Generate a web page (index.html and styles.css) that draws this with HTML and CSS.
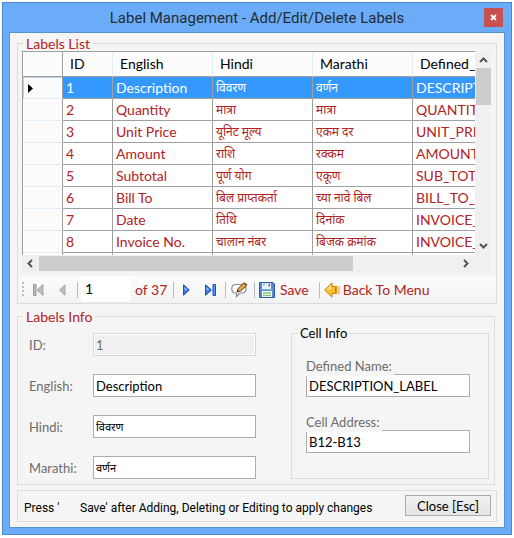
FILE: index.html
```
<!DOCTYPE html>
<html lang="en">
<head>
    <meta charset="UTF-8">
    <title>Label Management</title>
    <link rel="stylesheet" href="styles.css">
</head>
<body>

    <div class="window">
        <div class="titlebar">
            <h1>Label Management - Add/Edit/Delete Labels</h1>
            <button class="close-x" aria-label="Close window">
                <svg width="7" height="7" viewBox="0 0 7 7"><path d="M1 1L6 6M6 1L1 6" stroke="#fff" stroke-width="1.8"/></svg>
            </button>
        </div>

        <div class="client">

            <!-- Labels list -->
            <fieldset class="list-box">
                <legend>Labels List</legend>

                <div class="grid">
                    <div class="grid-view">
                        <table>
                            <thead>
                                <tr><th class="row-head"></th><th class="col-id">ID</th><th>English</th><th>Hindi</th><th>Marathi</th><th class="col-name">Defined_</th></tr>
                            </thead>
                            <tbody>
                                <tr class="selected"><td class="row-head"><svg width="5" height="9" viewBox="0 0 5 9"><path d="M0 0L5 4.500L0 9Z" fill="#000"/></svg></td><td>1</td><td>Description</td><td class="hi">विवरण</td><td class="hi">वर्णन</td><td>DESCRIPT</td></tr>
                                <tr><td class="row-head"></td><td>2</td><td>Quantity</td><td class="hi">मात्रा</td><td class="hi">मात्रा</td><td>QUANTITY</td></tr>
                                <tr><td class="row-head"></td><td>3</td><td>Unit Price</td><td class="hi">यूनिट मूल्य</td><td class="hi">एकम दर</td><td>UNIT_PRI</td></tr>
                                <tr><td class="row-head"></td><td>4</td><td>Amount</td><td class="hi">राशि</td><td class="hi">रक्कम</td><td>AMOUNT_</td></tr>
                                <tr><td class="row-head"></td><td>5</td><td>Subtotal</td><td class="hi">पूर्ण योग</td><td class="hi">एकूण</td><td>SUB_TOTA</td></tr>
                                <tr><td class="row-head"></td><td>6</td><td>Bill To</td><td class="hi">बिल प्राप्तकर्ता</td><td class="hi">च्या नावे बिल</td><td>BILL_TO_L</td></tr>
                                <tr><td class="row-head"></td><td>7</td><td>Date</td><td class="hi">तिथि</td><td class="hi">दिनांक</td><td>INVOICE_</td></tr>
                                <tr><td class="row-head"></td><td>8</td><td>Invoice No.</td><td class="hi">चालान नंबर</td><td class="hi">बिजक क्रमांक</td><td>INVOICE_</td></tr>
                                <tr><td class="row-head"></td><td></td><td></td><td></td><td></td><td></td></tr>
                            </tbody>
                        </table>
                    </div>
                    <div class="vscroll">
                        <svg width="9" height="6" viewBox="0 0 9 6"><path d="M1 5L4.500 1.500L8 5" fill="none" stroke="#555" stroke-width="2"/></svg>
                        <div class="vthumb"></div>
                        <svg class="down" width="9" height="6" viewBox="0 0 9 6"><path d="M1 1L4.500 4.500L8 1" fill="none" stroke="#555" stroke-width="2"/></svg>
                    </div>
                    <div class="hscroll">
                        <svg width="6" height="9" viewBox="0 0 6 9"><path d="M5 1L1.500 4.500L5 8" fill="none" stroke="#555" stroke-width="2"/></svg>
                        <div class="hthumb"></div>
                        <svg class="right" width="6" height="9" viewBox="0 0 6 9"><path d="M1 1L4.500 4.500L1 8" fill="none" stroke="#555" stroke-width="2"/></svg>
                    </div>
                </div>

                <div class="toolbar">
                    <span class="grip"></span>
                    <button class="tool first" aria-label="First">
                        <svg width="11" height="12" viewBox="0 0 11 12"><path d="M0.500 0.500H3V11.500H0.500Z" fill="#b9b9b9" stroke="#9c9c9c"/><path d="M10 0.500V11.500L4 6Z" fill="#bdbdbd" stroke="#a6a6a6"/></svg>
                    </button>
                    <button class="tool prev" aria-label="Previous">
                        <svg width="7" height="12" viewBox="0 0 7 12"><path d="M6 0.800V11.200L0.500 6Z" fill="#bdbdbd" stroke="#a6a6a6"/></svg>
                    </button>
                    <span class="sep"></span>
                    <input class="position" type="text" value="1" aria-label="Current record">
                    <span class="count">of 37</span>
                    <span class="sep"></span>
                    <button class="tool next" aria-label="Next">
                        <svg width="7" height="12" viewBox="0 0 7 12"><path d="M0.600 0.800V11.200L6.300 6Z" fill="#3f7fe8" stroke="#1746b4"/><path d="M1.500 3V6H4.500Z" fill="#8fc0fb"/></svg>
                    </button>
                    <button class="tool last" aria-label="Last">
                        <svg width="11" height="12" viewBox="0 0 11 12"><path d="M0.600 0.800V11.200L6.500 6Z" fill="#3f7fe8" stroke="#1746b4"/><path d="M1.500 3V6H4.500Z" fill="#8fc0fb"/><path d="M8 0.500H10.500V11.500H8Z" fill="#5b98f2" stroke="#1b4dba"/></svg>
                    </button>
                    <span class="sep"></span>
                    <button class="tool edit" aria-label="Edit">
                        <svg width="17" height="16" viewBox="0 0 17 16"><path d="M4.500 2.500H11C14 2.500 15 4.500 15 6.500C15 9.500 13.500 11 11 11H9L5.500 14.500V11H4.500C2 11 0.800 9.300 0.800 6.800C0.800 4.300 2 2.500 4.500 2.500Z" fill="#fff" stroke="#8a8a8a" stroke-width="1.200"/><path d="M6 10L7.200 6.500L12.500 1L15.500 3.600L9.700 9Z" fill="#e8a545" stroke="#5d4221" stroke-width="1"/><path d="M12.500 1L13.500 0.400L16.400 2.600L15.500 3.600Z" fill="#6b4b33"/><path d="M6 10L6.700 8L8 9.300Z" fill="#222"/></svg>
                    </button>
                    <span class="sep"></span>
                    <button class="tool save">
                        <svg width="16" height="16" viewBox="0 0 16 16"><path d="M0.500 0.500H14L15.500 2V15.500H0.500Z" fill="#5687d0" stroke="#2d5ba8"/><path d="M3 1H12V7H3Z" fill="#e9f1fb"/><path d="M9.500 1.500H11V4.500H9.500Z" fill="#5279b4"/><path d="M5 1V4" stroke="#7ea2d5"/><path d="M2 7.500H14" stroke="#8db2e8"/><path d="M3 9H13V15H3Z" fill="#fff"/><path d="M4 11H12M4 13.500H12" stroke="#83c373" stroke-width="1.500"/></svg>
                        Save
                    </button>
                    <span class="sep"></span>
                    <button class="tool back">
                        <svg width="16" height="16" viewBox="0 0 16 16"><path d="M0.700 8L8 0.800V4.500H11.500V11.500H8V15.200Z" fill="#fcc02e" stroke="#cf7d12"/><path d="M2.500 7.500L7 3V7.500Z" fill="#ffe28a"/><path d="M12.500 4V12M15 4V12" stroke="#de9626" stroke-width="1"/><path d="M13.700 4V12" stroke="#fbd056"/></svg>
                        Back To Menu
                    </button>
                </div>
            </fieldset>

            <!-- Details of the selected label -->
            <fieldset class="info-box">
                <legend>Labels Info</legend>
                <div class="fields">
                    <label for="lblId">ID:</label>
                    <input type="text" id="lblId" value="1" disabled>
                    <label for="lblEnglish">English:</label>
                    <input type="text" id="lblEnglish" value="Description">
                    <label for="lblHindi">Hindi:</label>
                    <input class="hi" type="text" id="lblHindi" value="विवरण">
                    <label for="lblMarathi">Marathi:</label>
                    <input class="hi" type="text" id="lblMarathi" value="वर्णन">
                </div>

                <fieldset class="cell-box">
                    <legend>Cell Info</legend>
                    <label for="cellName">Defined Name:</label>
                    <input type="text" id="cellName" value="DESCRIPTION_LABEL">
                    <label for="cellAddr">Cell Address:</label>
                    <input type="text" id="cellAddr" value="B12-B13">
                </fieldset>
            </fieldset>

            <div class="footer">
                <p><span class="press">Press '</span>Save' after Adding, Deleting or Editing to apply changes</p>
                <button class="close-btn">Close [Esc]</button>
            </div>
        </div>
    </div>

</body>
</html>
```

FILE: styles.css
```
* {
    box-sizing: border-box;
    margin: 0;
    padding: 0;
}

body {
    background: #fff;
    padding: 2px;
    font-family: Lato, "Noto Sans", sans-serif;
    font-size: 14px;
    color: #000;
}

button, input {
    font-family: inherit;
    font-size: inherit;
}

.window {
    background: #6aacf8;
    border: 1px solid #4f88c8;
    padding: 0 6px 6px;
}

/* Title bar */
.titlebar {
    position: relative;
    height: 29px;
}

.titlebar h1 {
    font-family: Roboto, sans-serif;
    font-size: 15px;
    font-weight: normal;
    line-height: 30px;
    text-align: center;
    color: #262b33;
}

.close-x {
    position: absolute;
    top: 5px;
    right: 2px;
    width: 19px;
    height: 19px;
    border: none;
    background: #c75050;
    display: flex;
    align-items: center;
    justify-content: center;
}

.client {
    background: #f5f5f5;
    border: 1px solid #5a8fce;
    padding: 3px 7px 5px;
}

fieldset {
    border: 1px solid #dcdcdc;
    min-width: 0;
}

legend {
    padding: 0 3px;
    line-height: 15px;
    color: #b22222;
}

.list-box {
    padding: 0 5px 0 4px;
}

.list-box legend {
    margin-left: 1px;
}

/* Data grid */
.grid {
    display: grid;
    grid-template-columns: 1fr 16px;
    grid-template-rows: 204px 17px;
}

.grid-view {
    overflow: hidden;
    background: #fff;
    border-top: 1px solid #a0a0a0;
    border-left: 1px solid #a0a0a0;
}

table {
    table-layout: fixed;
    width: 100%;
    border-collapse: separate;
    border-spacing: 0;
}

th, td {
    height: 22px;
    line-height: 20px;
    padding-left: 3px;
    text-align: left;
    white-space: nowrap;
    overflow: hidden;
    border-right: 1px solid #a0a0a0;
    border-bottom: 1px solid #a0a0a0;
    color: #b22222;
}

th {
    width: 100px;
    height: 25px;
    padding-left: 7px;
    font-weight: normal;
    background: #fcfcfc;
    border-right-color: #e3eefb;
    color: #000;
}

.hi {
    font-size: 12px;
}

.row-head {
    width: 40px;
    padding-left: 5px;
    background: #fcfcfc;
    border-right-color: #a0a0a0;
}

td.row-head {
    border-bottom-color: #e3eefb;
}

.col-id {
    width: 50px;
}

.col-name {
    width: auto;
}

th:last-child, td:last-child {
    border-right: none;
}

.selected td {
    background: #3399ff;
    color: #fff;
}

.selected td.row-head {
    background: #fafcfe;
    box-shadow: inset 1px 1px #c3d3e8;
}

.vscroll {
    background: #f0f0f0;
    display: flex;
    flex-direction: column;
    align-items: center;
    padding: 6px 0;
}

.vthumb {
    width: 15px;
    height: 37px;
    margin-top: 5px;
    background: #cdcdcd;
}

.down {
    margin-top: auto;
}

.hscroll {
    grid-column: 1 / 3;
    background: #f0f0f0;
    display: flex;
    align-items: center;
    padding: 0 22px 0 5px;
}

.hthumb {
    width: 71%;
    height: 15px;
    margin-left: 6px;
    background: #cdcdcd;
}

.right {
    margin-left: auto;
}

/* Navigator */
.toolbar {
    display: flex;
    align-items: center;
    height: 27px;
    margin: 4px -5px 0 -3px;
    padding-left: 3px;
    background: linear-gradient(#fcfcfc, #f3f3f3);
    color: #b22222;
}

.grip {
    width: 2px;
    height: 15px;
    background: repeating-linear-gradient(#bdbdbd 0 2px, transparent 2px 4px);
}

.tool {
    display: flex;
    align-items: center;
    gap: 5px;
    border: none;
    background: none;
    color: inherit;
    white-space: nowrap;
}

.sep {
    width: 1px;
    height: 16px;
    background: #bdbdbd;
}

.first {
    margin: 0 15px 0 9px;
}

.prev {
    margin-right: 11px;
}

.position {
    width: 50px;
    height: 25px;
    margin: 0 4px 2px 3px;
    padding-left: 4px;
    border: none;
    background: #fff;
}

.count {
    width: 38px;
}

.next {
    margin: 0 15px 0 9px;
}

.last {
    margin-right: 9px;
}

.edit {
    margin: 0 6px 0 5px;
}

.save {
    margin: 0 10px 0 4px;
}

.back {
    margin-left: 4px;
    gap: 3px;
}

/* Labels info */
.info-box {
    display: grid;
    grid-template-columns: 227fr 198fr;
    gap: 35px;
    margin: 5px 2px 0 0;
    padding: 2px 5px 5px 11px;
}

.info-box > legend {
    margin-left: -6px;
}

.fields {
    display: grid;
    grid-template-columns: 64px 1fr;
    align-content: start;
    align-items: center;
    row-gap: 18px;
    padding-top: 7px;
}

.info-box label {
    font-size: 13px;
    color: #6d6d6d;
}

.info-box input {
    width: 100%;
    height: 23px;
    padding: 0 2px;
    border: 1px solid #abadb3;
    background: #fff;
    font-size: 13px;
    color: #000;
}

.info-box input.hi {
    font-size: 11px;
}

.info-box input:disabled {
    background: #f0f0f0;
    border-color: #d9d9d9;
    box-shadow: inset 0 0 0 1px #fff;
    color: #6d6d6d;
}

.cell-box {
    display: flex;
    flex-direction: column;
    align-items: flex-start;
    padding: 15px 18px 24px 14px;
}

.cell-box legend {
    margin-left: -8px;
    padding: 0 2px;
    font-size: 13px;
    color: #000;
}

/* the captions sit over the top edge of their boxes */
.cell-box label {
    position: relative;
    line-height: 20px;
    margin-bottom: -2px;
    padding-right: 2px;
    background: #f5f5f5;
}

.cell-box input + label {
    margin-top: 15px;
}

/* Footer */
.footer {
    display: flex;
    align-items: flex-start;
    justify-content: space-between;
    height: 32px;
    margin-top: 5px;
    padding: 4px 5px 0 6px;
    border: 1px solid #dcdcdc;
}

.footer p {
    font-family: Roboto, sans-serif;
    font-size: 12px;
    line-height: 26px;
    white-space: nowrap;
}

.press {
    display: inline-block;
    width: 56px;
}

.close-btn {
    width: 86px;
    height: 21px;
    border: 1px solid #acacac;
    background: linear-gradient(#f1f1f1, #e5e5e5);
    font-size: 13px;
}
```
